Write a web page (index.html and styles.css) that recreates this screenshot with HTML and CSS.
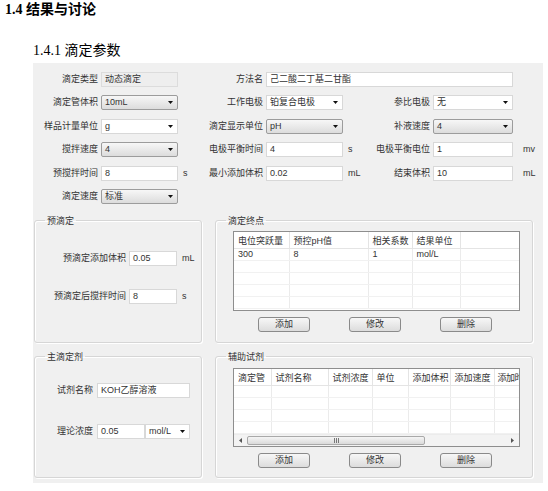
FILE: index.html
```html
<!DOCTYPE html>
<html lang="zh-CN">
<head>
<meta charset="utf-8">
<title>滴定参数</title>
<link rel="stylesheet" href="styles.css">
</head>
<body>
<h1 class="h1">1.4 结果与讨论</h1>
<h2 class="h2">1.4.1 滴定参数</h2>
<div class="panel">
  <div class="form">
    <span class="lb">滴定类型</span>
    <div class="fld ro">动态滴定</div>
    <span></span>
    <span class="lb">方法名</span>
    <div class="fld wide">己二酸二丁基二甘酯</div>
    <span></span>

    <span class="lb">滴定管体积</span>
    <div class="fld sel grey"><span>10mL</span><svg class="caret" viewBox="0 0 5 3"><path d="M0 0H5L2.5 3Z"/></svg></div>
    <span></span>
    <span class="lb">工作电极</span>
    <div class="fld sel"><span>铂复合电极</span><svg class="caret" viewBox="0 0 5 3"><path d="M0 0H5L2.5 3Z"/></svg></div>
    <span></span>
    <span class="lb">参比电极</span>
    <div class="fld sel"><span>无</span><svg class="caret" viewBox="0 0 5 3"><path d="M0 0H5L2.5 3Z"/></svg></div>
    <span></span>

    <span class="lb">样品计量单位</span>
    <div class="fld sel"><span>g</span><svg class="caret" viewBox="0 0 5 3"><path d="M0 0H5L2.5 3Z"/></svg></div>
    <span></span>
    <span class="lb">滴定显示单位</span>
    <div class="fld sel grey"><span>pH</span><svg class="caret" viewBox="0 0 5 3"><path d="M0 0H5L2.5 3Z"/></svg></div>
    <span></span>
    <span class="lb">补液速度</span>
    <div class="fld sel grey"><span>4</span><svg class="caret" viewBox="0 0 5 3"><path d="M0 0H5L2.5 3Z"/></svg></div>
    <span></span>

    <span class="lb">搅拌速度</span>
    <div class="fld sel grey"><span>4</span><svg class="caret" viewBox="0 0 5 3"><path d="M0 0H5L2.5 3Z"/></svg></div>
    <span></span>
    <span class="lb">电极平衡时间</span>
    <div class="fld">4</div>
    <span class="unit">s</span>
    <span class="lb">电极平衡电位</span>
    <div class="fld">1</div>
    <span class="unit far">mv</span>

    <span class="lb">预搅拌时间</span>
    <div class="fld">8</div>
    <span class="unit">s</span>
    <span class="lb">最小添加体积</span>
    <div class="fld">0.02</div>
    <span class="unit">mL</span>
    <span class="lb">结束体积</span>
    <div class="fld">10</div>
    <span class="unit far">mL</span>

    <span class="lb">滴定速度</span>
    <div class="fld sel grey"><span>标准</span><svg class="caret" viewBox="0 0 5 3"><path d="M0 0H5L2.5 3Z"/></svg></div>
  </div>

  <div class="groups">
    <fieldset class="grp">
      <legend>预滴定</legend>
      <div class="pre">
        <span class="lb">预滴定添加体积</span>
        <div class="fld">0.05</div>
        <span class="unit">mL</span>
        <span class="lb">预滴定后搅拌时间</span>
        <div class="fld">8</div>
        <span class="unit">s</span>
      </div>
    </fieldset>

    <fieldset class="grp">
      <legend>滴定终点</legend>
      <div class="tbl">
        <table class="dt">
          <thead>
            <tr><th class="w55">电位突跃量</th><th class="w79">预控pH值</th><th class="w44">相关系数</th><th class="w48">结果单位</th><th class="w59"></th></tr>
          </thead>
          <tbody>
            <tr><td>300</td><td>8</td><td>1</td><td>mol/L</td><td></td></tr>
            <tr><td></td><td></td><td></td><td></td><td></td></tr>
            <tr><td></td><td></td><td></td><td></td><td></td></tr>
            <tr><td></td><td></td><td></td><td></td><td></td></tr>
            <tr><td></td><td></td><td></td><td></td><td></td></tr>
          </tbody>
        </table>
      </div>
      <div class="btns">
        <button class="btn">添加</button>
        <button class="btn">修改</button>
        <button class="btn">删除</button>
      </div>
    </fieldset>

    <fieldset class="grp">
      <legend>主滴定剂</legend>
      <div class="main">
        <span class="lb">试剂名称</span>
        <div class="fld span2">KOH乙醇溶液</div>
        <span class="lb">理论浓度</span>
        <div class="fld">0.05</div>
        <div class="fld sel"><span>mol/L</span><svg class="caret" viewBox="0 0 5 3"><path d="M0 0H5L2.5 3Z"/></svg></div>
      </div>
    </fieldset>

    <fieldset class="grp">
      <legend>辅助试剂</legend>
      <div class="tbl tbl2">
        <div class="clip">
          <table class="dt wide-t">
            <thead>
              <tr><th class="w37">滴定管</th><th class="w57">试剂名称</th><th class="w44">试剂浓度</th><th class="w36">单位</th><th class="w42">添加体积</th><th class="w44">添加速度</th><th class="w60 last">添加时</th></tr>
            </thead>
            <tbody>
              <tr><td></td><td></td><td></td><td></td><td></td><td></td><td></td></tr>
              <tr><td></td><td></td><td></td><td></td><td></td><td></td><td></td></tr>
              <tr><td></td><td></td><td></td><td></td><td></td><td></td><td></td></tr>
              <tr><td></td><td></td><td></td><td></td><td></td><td></td><td></td></tr>
            </tbody>
          </table>
        </div>
        <div class="hscroll">
          <span class="sarr"><svg viewBox="0 0 3 5"><path d="M3 0V5L0 2.5Z"/></svg></span>
          <div class="track"><div class="thumb"><span class="grip"></span></div></div>
          <span class="sarr"><svg viewBox="0 0 3 5"><path d="M0 0V5L3 2.5Z"/></svg></span>
        </div>
      </div>
      <div class="btns">
        <button class="btn">添加</button>
        <button class="btn">修改</button>
        <button class="btn">删除</button>
      </div>
    </fieldset>
  </div>
</div>
</body>
</html>
```
FILE: styles.css
```css
* { box-sizing: border-box; }

body {
  margin: 0;
  width: 548px;
  height: 491px;
  overflow: hidden;
  background: #fff;
  color: #333;
  font-family: "Liberation Sans", "Noto Sans CJK SC", sans-serif;
}

.h1 {
  margin: 0;
  padding-left: 5px;
  height: 20px;
  font: bold 14px/20px "Liberation Serif", "Noto Sans CJK SC", serif;
  color: #000;
}

.h2 {
  margin: 21px 0 0 33px;
  height: 20px;
  font: normal 14px/20px "Liberation Serif", "Noto Sans CJK SC", serif;
  color: #000;
}

.panel {
  margin: 2px 0 0 33px;
  width: 510px;
  height: 420px;
  padding-top: 9px;
  background: #f0f0f0;
  font-size: 9px;
}

.form {
  display: grid;
  grid-template-columns: 68px 77px 24px 64px 77px 24px 66px 80px 30px;
  grid-auto-rows: 15px;
  row-gap: 8.4px;
  align-items: center;
}

.lb {
  text-align: right;
  padding-right: 3px;
  white-space: nowrap;
  line-height: 15px;
}

.fld {
  height: 15px;
  padding-left: 3px;
  border: 1px solid #d8d8d8;
  background: #fff;
  white-space: nowrap;
  overflow: hidden;
  display: flex;
  align-items: center;
  line-height: 13px;
}

.ro {
  background: #eeeeee;
  border-color: #dcdcdc;
}

.wide { grid-column: span 4; }
.span2 { grid-column: span 2; }

.sel {
  justify-content: space-between;
  padding-right: 4px;
}

.sel.grey {
  background: linear-gradient(#f7f7f7, #dcdcdc);
  border-color: #9c9c9c;
  border-radius: 2px;
}

.caret {
  width: 5px;
  height: 3px;
  fill: #111;
  flex: none;
}

.unit {
  padding-left: 5px;
  line-height: 15px;
}

.unit.far { padding-left: 10px; }

.groups {
  display: grid;
  margin-top: 11px;
  padding-left: 1px;
  grid-template-columns: 168px 318px;
  grid-template-rows: 128px 127px;
  column-gap: 13px;
  row-gap: 8px;
}

.grp {
  margin: 0;
  padding: 0;
  min-width: 0;
  border: 1px solid #d6d6d6;
  border-radius: 3px;
  box-shadow: inset 1px 1px 0 #fff, 1px 1px 0 #fff;
}

.grp legend {
  margin-left: 10px;
  padding: 0 2px;
  font-size: 9px;
  line-height: 12px;
}

.pre {
  display: grid;
  grid-template-columns: 94px 48px auto;
  grid-auto-rows: 15px;
  row-gap: 23px;
  margin-top: 24px;
  align-items: center;
}

.main {
  display: grid;
  grid-template-columns: 62px 48px 45px;
  grid-auto-rows: 15px;
  row-gap: 26px;
  margin-top: 20px;
  align-items: center;
}

.main .lb { padding-right: 4px; }

.tbl {
  margin: 4px 0 0 17px;
  width: 287px;
  height: 80px;
  border: 1px solid #8e8e8e;
  background: #fff;
  overflow: hidden;
}

.tbl2 {
  margin-top: 5px;
  height: 79px;
  display: flex;
  flex-direction: column;
}

.clip {
  flex: 1;
  overflow: hidden;
}

table.dt {
  border-collapse: collapse;
  table-layout: fixed;
  width: 285px;
  font-size: 9px;
}

table.wide-t { width: 320px; }

.dt th {
  height: 17px;
  padding: 0 0 0 4px;
  font-weight: normal;
  text-align: left;
  white-space: nowrap;
  overflow: hidden;
  border-right: 1px solid #e4e4e4;
  border-bottom: 1px solid #e4e4e4;
}

.dt th.last { padding-left: 3px; letter-spacing: -0.5px; }

.dt td {
  height: 12px;
  padding: 0 0 0 4px;
  line-height: 11px;
  white-space: nowrap;
  border-right: 1px solid #ebebeb;
  border-bottom: 1px solid #f1f1f1;
}

.w36 { width: 36px; }
.w37 { width: 37px; }
.w42 { width: 42px; }
.w44 { width: 44px; }
.w48 { width: 48px; }
.w55 { width: 55px; }
.w57 { width: 57px; }
.w59 { width: 59px; }
.w60 { width: 60px; }
.w79 { width: 79px; }

.hscroll {
  flex: none;
  height: 12px;
  display: flex;
  background: #f3f3f3;
  border-top: 1px solid #ececec;
}

.sarr {
  width: 13px;
  display: flex;
  align-items: center;
  justify-content: center;
}

.sarr svg {
  width: 3px;
  height: 5px;
  fill: #555;
}

.track {
  flex: 1;
  padding: 1px 0;
}

.thumb {
  width: 178px;
  height: 100%;
  border: 1px solid #a9a9a9;
  border-radius: 2px;
  background: linear-gradient(#f5f5f5, #dadada);
  display: flex;
  align-items: center;
  justify-content: center;
}

.grip {
  width: 5px;
  height: 5px;
  background: repeating-linear-gradient(90deg, #777 0 1px, transparent 1px 2px);
}

.btns {
  display: flex;
  gap: 39px;
  margin: 6px 0 0 42px;
}

.btn {
  width: 52px;
  height: 15px;
  padding: 0;
  border: 1px solid #8a8a8a;
  border-radius: 3px;
  background: linear-gradient(#f7f7f7, #dcdcdc);
  font-family: "Liberation Sans", "Noto Sans CJK SC", sans-serif;
  font-size: 9px;
  line-height: 13px;
  color: #333;
}
```
